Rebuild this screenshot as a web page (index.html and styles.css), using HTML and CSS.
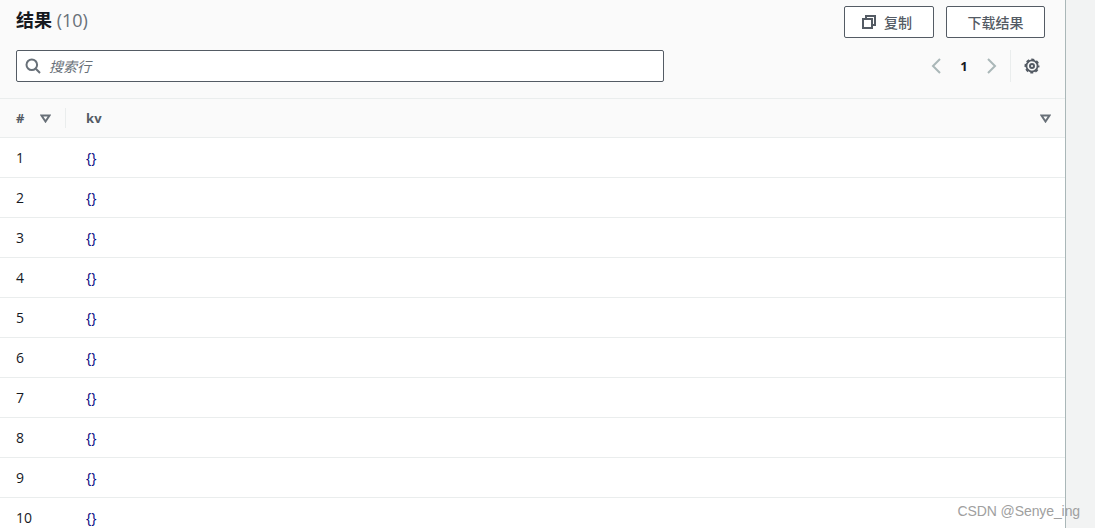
FILE: index.html
```html
<!DOCTYPE html>
<html lang="zh">
<head>
<meta charset="utf-8">
<title>结果</title>
<link rel="stylesheet" href="styles.css">
</head>
<body>
<main class="panel">
  <header class="head">
    <div class="title-row">
      <h2 class="title">结果 <span class="count">(10)</span></h2>
      <div class="actions">
        <button class="btn btn-copy">
          <svg class="copy-icon" width="14" height="14" viewBox="0 0 14 14"><path d="M4 3.500V1h9v9h-2.500" fill="none" stroke="#545b64" stroke-width="2"/><rect x="1" y="4" width="9" height="9" fill="none" stroke="#545b64" stroke-width="2"/></svg>
          <span>复制</span>
        </button>
        <button class="btn btn-dl">下载结果</button>
      </div>
    </div>
    <div class="tools-row">
      <label class="search">
        <svg width="16" height="16" viewBox="0 0 16 16"><circle cx="6.800" cy="6.800" r="5.300" fill="none" stroke="#687078" stroke-width="2"/><path d="M10.800 10.800 15 15" stroke="#687078" stroke-width="2" fill="none"/></svg>
        <span class="placeholder">搜索行</span>
      </label>
      <div class="pager">
        <svg class="chev" width="12" height="18" viewBox="0 0 12 18"><path d="M10 2 3 9l7 7" fill="none" stroke="#aab7b8" stroke-width="2"/></svg>
        <span class="page">1</span>
        <svg class="chev" width="12" height="18" viewBox="0 0 12 18"><path d="M2 2l7 7-7 7" fill="none" stroke="#aab7b8" stroke-width="2"/></svg>
        <span class="sep"></span>
        <svg class="gear" width="16" height="16" viewBox="0 0 16 16"><circle cx="8" cy="8" r="6.200" fill="none" stroke="#545b64" stroke-width="2.600" stroke-dasharray="2.800 2.070" stroke-dashoffset="1.400"/><circle cx="8" cy="8" r="5.600" fill="none" stroke="#545b64" stroke-width="1.800"/><circle cx="8" cy="8" r="2" fill="none" stroke="#545b64" stroke-width="2"/></svg>
      </div>
    </div>
  </header>
  <table class="grid">
    <thead>
      <tr>
        <th class="col-num"><div class="th-in"><span>#</span><svg width="11" height="9" viewBox="0 0 11 9"><path d="M1.500 1.500h8L5.500 7.500z" fill="none" stroke="#687078" stroke-width="2"/></svg></div></th>
        <th class="col-kv"><div class="th-in"><span>kv</span><svg width="11" height="9" viewBox="0 0 11 9"><path d="M1.500 1.500h8L5.500 7.500z" fill="none" stroke="#687078" stroke-width="2"/></svg></div></th>
      </tr>
    </thead>
    <tbody>
      <tr><td>1</td><td class="val">{}</td></tr>
      <tr><td>2</td><td class="val">{}</td></tr>
      <tr><td>3</td><td class="val">{}</td></tr>
      <tr><td>4</td><td class="val">{}</td></tr>
      <tr><td>5</td><td class="val">{}</td></tr>
      <tr><td>6</td><td class="val">{}</td></tr>
      <tr><td>7</td><td class="val">{}</td></tr>
      <tr><td>8</td><td class="val">{}</td></tr>
      <tr><td>9</td><td class="val">{}</td></tr>
      <tr><td>10</td><td class="val">{}</td></tr>
    </tbody>
  </table>
</main>
<div class="watermark">CSDN @Senye_ing</div>
</body>
</html>
```
FILE: styles.css
```css
* { box-sizing: border-box; }
html, body { margin: 0; height: 100%; overflow: hidden; }
body {
  background: #f2f3f3;
  font-family: "Open Sans", "Noto Sans CJK SC", sans-serif;
  font-size: 14px;
  color: #16191f;
}
.panel {
  width: 1066px;
  height: 528px;
  background: #fff;
  border-right: 1px solid #aab7b8;
  overflow: hidden;
}
.head {
  height: 99px;
  background: #fafafa;
  border-bottom: 1px solid #eaeded;
  padding: 6px 20px 0 16px;
}
.title-row { display: flex; justify-content: space-between; align-items: flex-start; height: 44px; }
.title { margin: 0; font-size: 18px; line-height: 28px; font-weight: 700; }
.count { font-weight: 400; color: #687078; }
.actions { display: flex; gap: 12px; }
.btn {
  height: 32px;
  border: 1px solid #545b64;
  border-radius: 2px;
  background: #fff;
  color: #545b64;
  font: 500 14px "Noto Sans CJK SC", sans-serif;
  display: flex;
  align-items: center;
  justify-content: center;
  padding: 0;
}
.btn-copy { width: 90px; gap: 8px; padding-right: 4px; }
.btn-dl { width: 99px; }
.tools-row { display: flex; justify-content: space-between; align-items: center; height: 32px; }
.search {
  width: 648px;
  height: 32px;
  background: #fff;
  border: 1px solid #545b64;
  border-radius: 2px;
  display: flex;
  align-items: center;
  gap: 8px;
  padding-left: 8px;
}
.placeholder { font-style: italic; color: #687078; font-size: 14px; }
.pager { display: flex; align-items: center; height: 32px; }
.page { width: 44px; text-align: center; font-weight: 700; font-size: 13px; }
.sep { width: 1px; height: 32px; background: #eaeded; margin: 0 13px 0 12px; }
.gear { margin-right: 5px; }
.grid { width: 100%; border-collapse: separate; border-spacing: 0; table-layout: fixed; }
.grid th { height: 39px; background: #fafafa; border-bottom: 1px solid #eaeded; padding: 0; text-align: left; font-size: 13px; color: #545b64; font-weight: 700; letter-spacing: .3px; }
.col-num { width: 66px; }
.th-in { display: flex; justify-content: space-between; align-items: center; }
.col-num .th-in { padding: 0 14px 0 16px; height: 20px; border-right: 1px solid #eaeded; }
.col-kv .th-in { padding: 0 14px 0 20px; }
.grid td { height: 40px; border-bottom: 1px solid #eaeded; padding: 0 0 0 16px; font-size: 14px; font-weight: 400; }
.grid td.val { padding-left: 20px; color: #000080; }
.watermark {
  position: absolute;
  right: 15px;
  bottom: 9px;
  font: 14px "Liberation Sans", sans-serif;
  letter-spacing: -.1px;
  color: #a0a0a0;
}
```
